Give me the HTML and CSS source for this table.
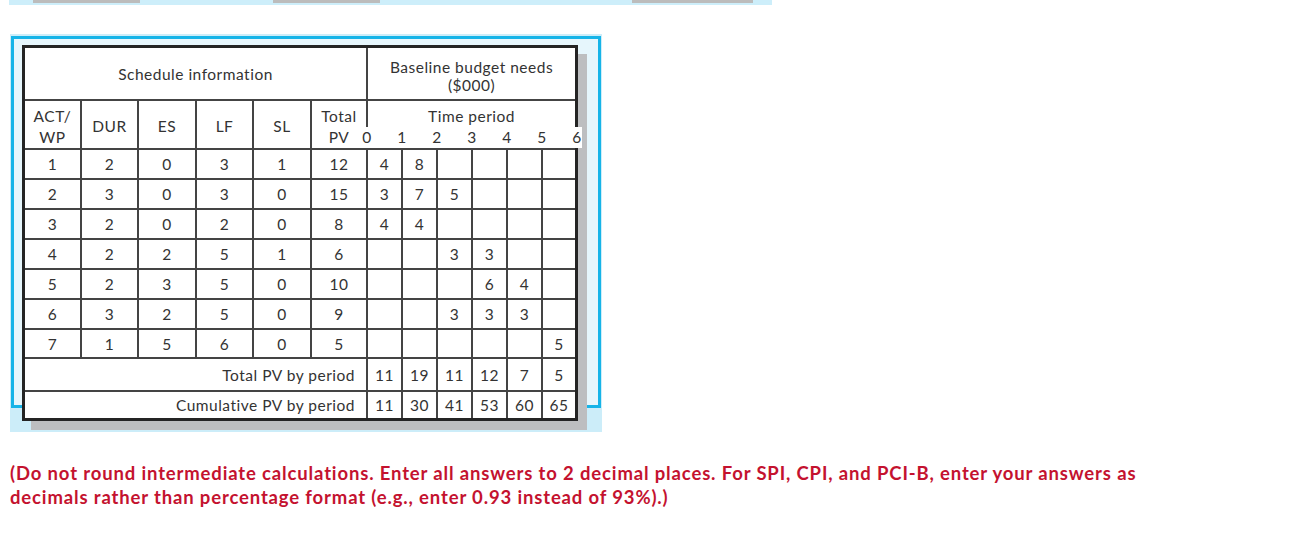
FILE: index.html
```html
<!DOCTYPE html>
<html lang="en">
<head>
<meta charset="utf-8">
<title>Schedule information</title>
<link rel="stylesheet" href="styles.css">
</head>
<body>
<div class="strip"><span class="bar b1"></span><span class="bar b2"></span><span class="bar b3"></span></div>
<div class="panel">
  <div class="frame">
    <table class="sched">
      <colgroup>
        <col class="c57"><col class="c57"><col class="c58"><col class="c57"><col class="c58"><col class="c56">
        <col class="c35"><col class="c35"><col class="c35"><col class="c35"><col class="c35"><col class="c32">
      </colgroup>
      <tr class="h1">
        <td colspan="6">Schedule information</td>
        <td colspan="6" class="last bb">Baseline budget needs<br>($000)</td>
      </tr>
      <tr class="h2">
        <td>ACT/<br>WP</td>
        <td>DUR</td>
        <td>ES</td>
        <td>LF</td>
        <td>SL</td>
        <td>Total<br>PV</td>
        <td colspan="6" class="last tp">
          <div>Time period</div>
          <div class="nums"><span>0</span><span>1</span><span>2</span><span>3</span><span>4</span><span>5</span><span>6</span></div>
        </td>
      </tr>
      <tr class="d"><td>1</td><td>2</td><td>0</td><td>3</td><td>1</td><td>12</td><td>4</td><td>8</td><td></td><td></td><td></td><td class="last"></td></tr>
      <tr class="d"><td>2</td><td>3</td><td>0</td><td>3</td><td>0</td><td>15</td><td>3</td><td>7</td><td>5</td><td></td><td></td><td class="last"></td></tr>
      <tr class="d"><td>3</td><td>2</td><td>0</td><td>2</td><td>0</td><td>8</td><td>4</td><td>4</td><td></td><td></td><td></td><td class="last"></td></tr>
      <tr class="d"><td>4</td><td>2</td><td>2</td><td>5</td><td>1</td><td>6</td><td></td><td></td><td>3</td><td>3</td><td></td><td class="last"></td></tr>
      <tr class="d"><td>5</td><td>2</td><td>3</td><td>5</td><td>0</td><td>10</td><td></td><td></td><td></td><td>6</td><td>4</td><td class="last"></td></tr>
      <tr class="d"><td>6</td><td>3</td><td>2</td><td>5</td><td>0</td><td>9</td><td></td><td></td><td>3</td><td>3</td><td>3</td><td class="last"></td></tr>
      <tr class="d d7"><td>7</td><td>1</td><td>5</td><td>6</td><td>0</td><td>5</td><td></td><td></td><td></td><td></td><td></td><td class="last">5</td></tr>
      <tr class="tot">
        <td colspan="6" class="lbl">Total PV by period</td>
        <td>11</td><td>19</td><td>11</td><td>12</td><td>7</td><td class="last">5</td>
      </tr>
      <tr class="cum">
        <td colspan="6" class="lbl">Cumulative PV by period</td>
        <td>11</td><td>30</td><td>41</td><td>53</td><td>60</td><td class="last">65</td>
      </tr>
    </table>
  </div>
</div>
<p class="note">(Do not round intermediate calculations. Enter all answers to 2 decimal places. For SPI, CPI, and PCI-B, enter your answers as decimals rather than percentage format (e.g., enter 0.93 instead of 93%).)</p>
</body>
</html>
```
FILE: styles.css
```css
html, body {
  margin: 0;
  padding: 0;
  background: #ffffff;
}

body {
  font-family: Lato, "Open Sans", "DejaVu Sans", sans-serif;
}

.strip {
  display: flex;
  margin-left: 9px;
  width: 763px;
  height: 5px;
  background: #cdeefa;
}

.bar {
  height: 3px;
  background: #bcbcbc;
}

.b1 { margin-left: 24px; width: 107px; }
.b2 { margin-left: 133px; width: 107px; }
.b3 { margin-left: 252px; width: 121px; }

.panel {
  box-sizing: border-box;
  margin: 29px 0 0 10px;
  width: 592px;
  height: 398px;
  padding: 2px 1px 0 1px;
  background: #ccedf9;
}

.frame {
  box-sizing: border-box;
  height: 372px;
  border: 3px solid #16b4e8;
  background: #e6f6fc;
  padding: 6px 0 0 8px;
}

.sched {
  box-sizing: border-box;
  width: 556px;
  table-layout: fixed;
  border-collapse: separate;
  border-spacing: 0;
  border: 3px solid #242424;
  background: #ffffff;
  box-shadow: 9px 9px 0 #bdbec0;
  color: #333333;
  font-size: 15.5px;
  letter-spacing: 0.5px;
}

.c57 { width: 57px; }
.c58 { width: 58px; }
.c56 { width: 56px; }
.c35 { width: 35px; }
.c32 { width: 32px; }

.sched td {
  box-sizing: border-box;
  padding: 0;
  text-align: center;
  vertical-align: middle;
  border-right: 2px solid #444444;
  border-bottom: 2px solid #444444;
  line-height: 18px;
}

.sched td.last {
  border-right: none;
}

.sched tr.cum td {
  border-bottom: none;
}

.h1 { height: 53px; }
.h1 td { padding-top: 1px; }
.h1 td.bb { padding-top: 5px; }

.h2 { height: 49px; }
.h2 td {
  line-height: 21px;
  padding-top: 4px;
}

.d { height: 30px; }
.d7 { height: 29px; }
.tot { height: 33px; }
.cum { height: 26px; }

.sched td.lbl {
  text-align: right;
  padding-right: 11px;
}

.tp .nums {
  display: flex;
  justify-content: space-between;
  margin: 0 -7px 0 -6px;
}

.tp .nums span {
  width: 10px;
  text-align: center;
  background: #ffffff;
}

.note {
  margin: 29px 0 0 10px;
  max-width: 1165px;
  color: #c4122f;
  font-weight: 700;
  font-size: 18.5px;
  letter-spacing: 0.85px;
  line-height: 24px;
}
```
